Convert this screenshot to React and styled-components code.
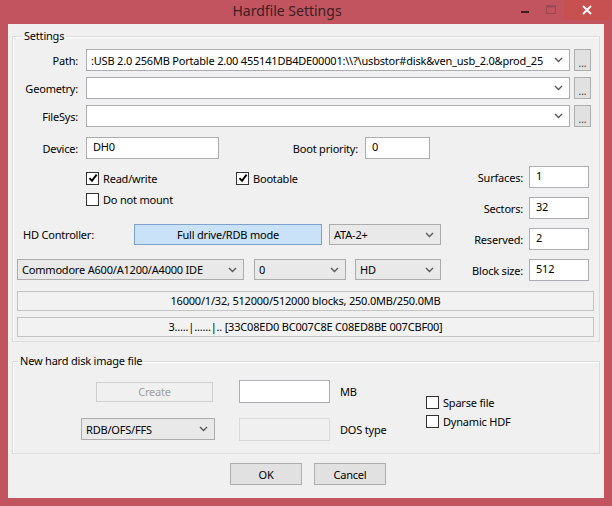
import React from 'react'
import styled, { createGlobalStyle } from 'styled-components'

const Global = createGlobalStyle`
  html, body { margin: 0; padding: 0; }
  body {
    width: 612px;
    height: 506px;
    overflow: hidden;
    font-family: "Noto Sans", "Open Sans", sans-serif;
    font-size: 11px;
    letter-spacing: -0.2px;
    color: #000;
  }
`

const Window = styled.div`
  box-sizing: border-box;
  width: 612px;
  height: 506px;
  background: #c2545f;
  display: flex;
  flex-direction: column;
  padding: 0 8px 8px 8px;
`

const TitleBar = styled.div`
  height: 24px;
  display: flex;
  align-items: flex-start;
`

const Title = styled.div`
  flex: 1;
  text-align: center;
  font-size: 14px;
  letter-spacing: 0;
  line-height: 21px;
  color: #3b1f23;
  padding-left: 54px;
`

const Caption = styled.div`
  display: flex;
  align-items: flex-start;
  height: 20px;
  margin-right: -5px;
`

const CaptionButton = styled.div`
  width: ${p => p.w}px;
  height: 20px;
  display: flex;
  align-items: center;
  justify-content: center;
  background: ${p => p.close ? '#c75050' : 'transparent'};
`

const Client = styled.div`
  flex: 1;
  background: #f0f0f0;
  padding: 0 4px;
  display: flex;
  flex-direction: column;
`

const Group = styled.fieldset`
  margin: ${p => p.top}px 0 0 0;
  padding: ${p => p.pad};
  border: 1px solid #dcdcdc;
  box-shadow: inset 1px 1px 0 #fff;
  min-width: 0;
`

const Legend = styled.legend`
  margin-left: 5px;
  padding: 0 2px;
  line-height: 16px;
`

const PathGrid = styled.div`
  display: grid;
  grid-template-columns: 61px minmax(0, 1fr) 17px;
  column-gap: 8px;
  row-gap: 6px;
  align-items: center;
  margin-right: -1px;
  & > :nth-child(3n) { margin-left: -4px; }
`

const Label = styled.div`
  text-align: ${p => p.left ? 'left' : 'right'};
  padding-left: ${p => p.left ? 6 : 0}px;
  white-space: nowrap;
  width: ${p => p.w ? p.w + 'px' : 'auto'};
  box-sizing: border-box;
`

const ComboBox = styled.div`
  box-sizing: border-box;
  height: ${p => p.h || 22}px;
  width: ${p => p.w ? p.w + 'px' : 'auto'};
  margin-left: ${p => p.ml || 0}px;
  border: 1px solid ${p => p.editable ? '#abadb3' : '#acacac'};
  background: ${p => p.editable ? '#fff' : '#e9e9e9'};
  display: flex;
  align-items: center;
  justify-content: space-between;
  gap: 4px;
  padding: 0 6px 0 4px;
  white-space: nowrap;
  overflow: hidden;
`

const ComboText = styled.span`
  overflow: hidden;
`

const DotsButton = styled.div`
  box-sizing: border-box;
  height: 22px;
  width: 17px;
  border: 1px solid #adadad;
  background: #e1e1e1;
  font-size: 10px;
  letter-spacing: 0;
  line-height: 26px;
  text-align: center;
  color: #333;
`

const Row = styled.div`
  display: flex;
  align-items: center;
  margin-top: ${p => p.mt || 0}px;
  padding-left: ${p => p.pl || 0}px;
`

const TextField = styled.div`
  box-sizing: border-box;
  height: ${p => p.h || 22}px;
  width: ${p => p.w}px;
  border: 1px solid ${p => p.disabled ? '#d9d9d9' : '#abadb3'};
  background: ${p => p.disabled ? '#f0f0f0' : '#fff'};
  padding: 0 6px;
  line-height: ${p => (p.h || 22) - 4}px;
  margin-left: ${p => p.ml || 0}px;
`

const Middle = styled.div`
  display: flex;
  margin-top: 7px;
`

const LeftCol = styled.div`
  width: 424px;
  display: flex;
  flex-direction: column;
`

const RightCol = styled.div`
  flex: 1;
  display: flex;
  flex-direction: column;
  gap: 9px;
  padding-right: 5px;
`

const SizeRow = styled.div`
  display: flex;
  align-items: center;
  justify-content: flex-end;
  gap: 6px;
`

const CheckRow = styled.label`
  display: flex;
  align-items: center;
  gap: 4px;
  height: 16px;
  width: ${p => p.w ? p.w + 'px' : 'auto'};
`

const Box = styled.span`
  box-sizing: border-box;
  width: 13px;
  height: 13px;
  border: 1px solid #333;
  background: #fff;
  display: flex;
  align-items: center;
  justify-content: center;
`

const PushButton = styled.div`
  box-sizing: border-box;
  height: ${p => p.h || 22}px;
  width: ${p => p.w}px;
  border: 1px solid ${p => p.active ? '#7da2ce' : p.disabled ? '#d0d0d0' : '#adadad'};
  background: ${p => p.active ? '#cae2f7' : p.disabled ? '#f0f0f0' : '#e1e1e1'};
  color: ${p => p.disabled ? '#a0a0a0' : '#000'};
  display: flex;
  align-items: center;
  justify-content: center;
  margin-left: ${p => p.ml || 0}px;
`

const StatusBar = styled.div`
  box-sizing: border-box;
  height: 20px;
  border: 1px solid #c4c4c4;
  background: #f2f2f2;
  text-align: center;
  line-height: 18px;
  margin-top: ${p => p.mt}px;
`

const NewGrid = styled.div`
  display: grid;
  grid-template-columns: 134px 91px 87px auto;
  grid-template-rows: 23px 22px;
  column-gap: 24px;
  row-gap: 15px;
  align-items: center;
  padding-left: 68px;
  & > :nth-child(3), & > :nth-child(6) { margin-left: -14px; }
`

const Side = styled.div`
  grid-column: 4;
  grid-row: 1 / 3;
  display: flex;
  flex-direction: column;
  gap: 3px;
  margin-left: -39px;
  margin-top: 3px;
`

const Footer = styled.div`
  display: flex;
  justify-content: center;
  gap: 12px;
  margin-top: 9px;
  padding-left: 4px;
`

const Chevron = () => (
  <svg width="9" height="6" viewBox="0 0 9 6" style={{ flexShrink: 0 }}>
    <path d="M1 1 L4.5 4.5 L8 1" fill="none" stroke="#5a5a5a" strokeWidth="1.4" />
  </svg>
)

const Combo = ({ children, ...rest }) => (
  <ComboBox {...rest}>
    <ComboText>{children}</ComboText>
    <Chevron />
  </ComboBox>
)

const Check = ({ checked, label, w }) => (
  <CheckRow w={w}>
    <Box>
      {checked && (
        <svg width="10" height="10" viewBox="0 0 10 10">
          <path d="M1.5 5.2 L4 7.8 L8.6 1.6" fill="none" stroke="#000" strokeWidth="1.9" />
        </svg>
      )}
    </Box>
    {label}
  </CheckRow>
)

export default function App() {
  return (
    <>
      <Global />
      <Window>
        <TitleBar>
          <Title>Hardfile Settings</Title>
          <Caption>
            <CaptionButton w={26}>
              <svg width="10" height="10" viewBox="0 0 10 10">
                <rect x="1" y="6" width="8" height="2" fill="#3b1f23" />
              </svg>
            </CaptionButton>
            <CaptionButton w={26}>
              <svg width="10" height="10" viewBox="0 0 10 10">
                <rect x="0.5" y="0.5" width="9" height="8" fill="none" stroke="#9a4a52" />
                <rect x="0.5" y="0.5" width="9" height="2" fill="#9a4a52" />
              </svg>
            </CaptionButton>
            <CaptionButton w={45} close>
              <svg width="10" height="10" viewBox="0 0 10 10">
                <path d="M1 1 L9 9 M9 1 L1 9" stroke="#fff" strokeWidth="1.8" />
              </svg>
            </CaptionButton>
          </Caption>
        </TitleBar>
        <Client>
          <Group top={4} pad="5px 5px 4px 4px">
            <Legend>Settings</Legend>
            <PathGrid>
              <Label>Path:</Label>
              <Combo editable>:USB 2.0 256MB Portable 2.00 455141DB4DE00001:\\?\usbstor#disk&amp;ven_usb_2.0&amp;prod_25</Combo>
              <DotsButton>...</DotsButton>
              <Label>Geometry:</Label>
              <Combo editable />
              <DotsButton>...</DotsButton>
              <Label>FileSys:</Label>
              <Combo editable />
              <DotsButton>...</DotsButton>
            </PathGrid>
            <Row mt={10}>
              <Label w={61}>Device:</Label>
              <TextField w={133} ml={8}>DH0</TextField>
              <Label w={139}>Boot priority:</Label>
              <TextField w={65} ml={7}>0</TextField>
            </Row>
            <Middle>
              <LeftCol>
                <Row mt={4} pl={69}>
                  <Check checked label="Read/write" w={150} />
                  <Check checked label="Bootable" />
                </Row>
                <Row mt={5} pl={69}>
                  <Check label="Do not mount" />
                </Row>
                <Row mt={17}>
                  <Label w={117} left>HD Controller:</Label>
                  <PushButton w={188} h={21} active>Full drive/RDB mode</PushButton>
                  <Combo w={112} h={21} ml={7}>ATA-2+</Combo>
                </Row>
                <Row mt={14}>
                  <Combo w={227} h={21}>Commodore A600/A1200/A4000 IDE</Combo>
                  <Combo w={92} h={21} ml={10}>0</Combo>
                  <Combo w={86} h={21} ml={9}>HD</Combo>
                </Row>
              </LeftCol>
              <RightCol>
                <SizeRow><Label>Surfaces:</Label><TextField w={60}>1</TextField></SizeRow>
                <SizeRow><Label>Sectors:</Label><TextField w={60}>32</TextField></SizeRow>
                <SizeRow><Label>Reserved:</Label><TextField w={60}>2</TextField></SizeRow>
                <SizeRow><Label>Block size:</Label><TextField w={60}>512</TextField></SizeRow>
              </RightCol>
            </Middle>
            <StatusBar mt={10}>16000/1/32, 512000/512000 blocks, 250.0MB/250.0MB</StatusBar>
            <StatusBar mt={6}>3.....|......|.. [33C08ED0 BC007C8E C08ED8BE 007CBF00]</StatusBar>
          </Group>
          <Group top={11} pad="11px 4px 13px 0">
            <Legend>New hard disk image file</Legend>
            <NewGrid>
              <PushButton w={117} h={20} disabled ml={15}>Create</PushButton>
              <TextField w={91} h={23} />
              <span>MB</span>
              <Combo w={134} h={22}>RDB/OFS/FFS</Combo>
              <TextField w={91} h={23} disabled />
              <span>DOS type</span>
              <Side>
                <Check label="Sparse file" />
                <Check label="Dynamic HDF" />
              </Side>
            </NewGrid>
          </Group>
          <Footer>
            <PushButton w={72}>OK</PushButton>
            <PushButton w={72}>Cancel</PushButton>
          </Footer>
        </Client>
      </Window>
    </>
  )
}
